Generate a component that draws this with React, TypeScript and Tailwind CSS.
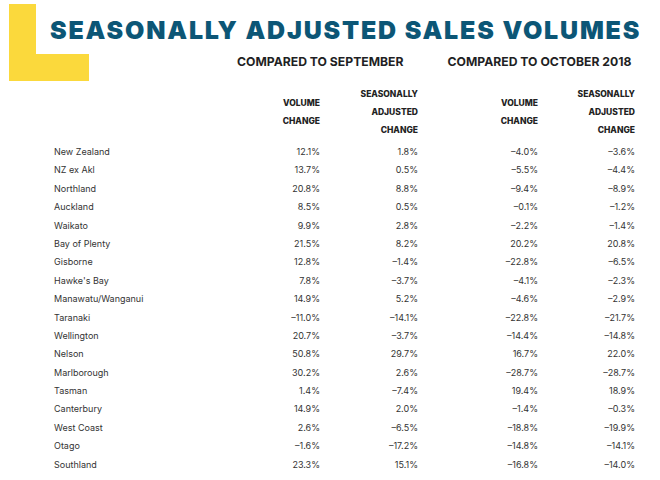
import React from "react";

const rows: [string, string, string, string, string][] = [
  ["New Zealand", "12.1%", "1.8%", "–4.0%", "–3.6%"],
  ["NZ ex Akl", "13.7%", "0.5%", "–5.5%", "–4.4%"],
  ["Northland", "20.8%", "8.8%", "–9.4%", "–8.9%"],
  ["Auckland", "8.5%", "0.5%", "–0.1%", "–1.2%"],
  ["Waikato", "9.9%", "2.8%", "–2.2%", "–1.4%"],
  ["Bay of Plenty", "21.5%", "8.2%", "20.2%", "20.8%"],
  ["Gisborne", "12.8%", "–1.4%", "–22.8%", "–6.5%"],
  ["Hawke's Bay", "7.8%", "–3.7%", "–4.1%", "–2.3%"],
  ["Manawatu/Wanganui", "14.9%", "5.2%", "–4.6%", "–2.9%"],
  ["Taranaki", "–11.0%", "–14.1%", "–22.8%", "–21.7%"],
  ["Wellington", "20.7%", "–3.7%", "–14.4%", "–14.8%"],
  ["Nelson", "50.8%", "29.7%", "16.7%", "22.0%"],
  ["Marlborough", "30.2%", "2.6%", "–28.7%", "–28.7%"],
  ["Tasman", "1.4%", "–7.4%", "19.4%", "18.9%"],
  ["Canterbury", "14.9%", "2.0%", "–1.4%", "–0.3%"],
  ["West Coast", "2.6%", "–6.5%", "–18.8%", "–19.9%"],
  ["Otago", "–1.6%", "–17.2%", "–14.8%", "–14.1%"],
  ["Southland", "23.3%", "15.1%", "–16.8%", "–14.0%"],
];

const font = { fontFamily: "Inter, 'Noto Sans', sans-serif" };

export default function App() {
  return (
    <div className="w-[660px] h-[480px] bg-white overflow-hidden" style={font}>
      {/* Row 1: vertical bar of the L + title */}
      <div className="flex h-[54px]">
        <div className="ml-[9px] mt-[4px] w-[27px] h-[50px] bg-[#fbd93c]" />
        <h1 className="ml-[14px] mt-[18px] text-[25px] leading-none font-black tracking-[0.072em] text-[#0c5676] whitespace-nowrap">
          SEASONALLY ADJUSTED SALES VOLUMES
        </h1>
      </div>
      {/* Row 2: horizontal arm of the L + subheaders */}
      <div className="flex h-[27px]">
        <div className="ml-[9px] w-[80px] h-[27px] bg-[#fbd93c]" />
        <div className="ml-[148px] mt-[1.5px] text-[12.2px] leading-none font-bold text-[#1f1f24] whitespace-nowrap">
          COMPARED TO SEPTEMBER
        </div>
        <div className="ml-[44px] mt-[1.5px] text-[12.2px] leading-none font-bold text-[#1f1f24] whitespace-nowrap">
          COMPARED TO OCTOBER 2018
        </div>
      </div>
      {/* Table */}
      <div className="ml-[54px] mt-[4px] grid grid-cols-[226px_40px_98px_120px_97px]">
        <div />
        <div className="flex items-center justify-end text-right text-[8.5px] leading-[18px] font-extrabold text-[#222] whitespace-nowrap">
          <div>
            VOLUME
            <br />
            CHANGE
          </div>
        </div>
        <div className="text-right text-[8.5px] leading-[18px] font-extrabold text-[#222]">
          SEASONALLY
          <br />
          ADJUSTED
          <br />
          CHANGE
        </div>
        <div className="flex items-center justify-end text-right text-[8.5px] leading-[18px] font-extrabold text-[#222] whitespace-nowrap">
          <div>
            VOLUME
            <br />
            CHANGE
          </div>
        </div>
        <div className="text-right text-[8.5px] leading-[18px] font-extrabold text-[#222]">
          SEASONALLY
          <br />
          ADJUSTED
          <br />
          CHANGE
        </div>
      </div>
      <div className="ml-[54px] mt-[4px] grid grid-cols-[226px_40px_98px_120px_97px] auto-rows-[18.4px] text-[9px] leading-[18.4px] text-[#333] whitespace-nowrap">
        {rows.map((r) => (
          <React.Fragment key={r[0]}>
            <div>{r[0]}</div>
            <div className="text-right">{r[1]}</div>
            <div className="text-right">{r[2]}</div>
            <div className="text-right">{r[3]}</div>
            <div className="text-right">{r[4]}</div>
          </React.Fragment>
        ))}
      </div>
    </div>
  );
}
